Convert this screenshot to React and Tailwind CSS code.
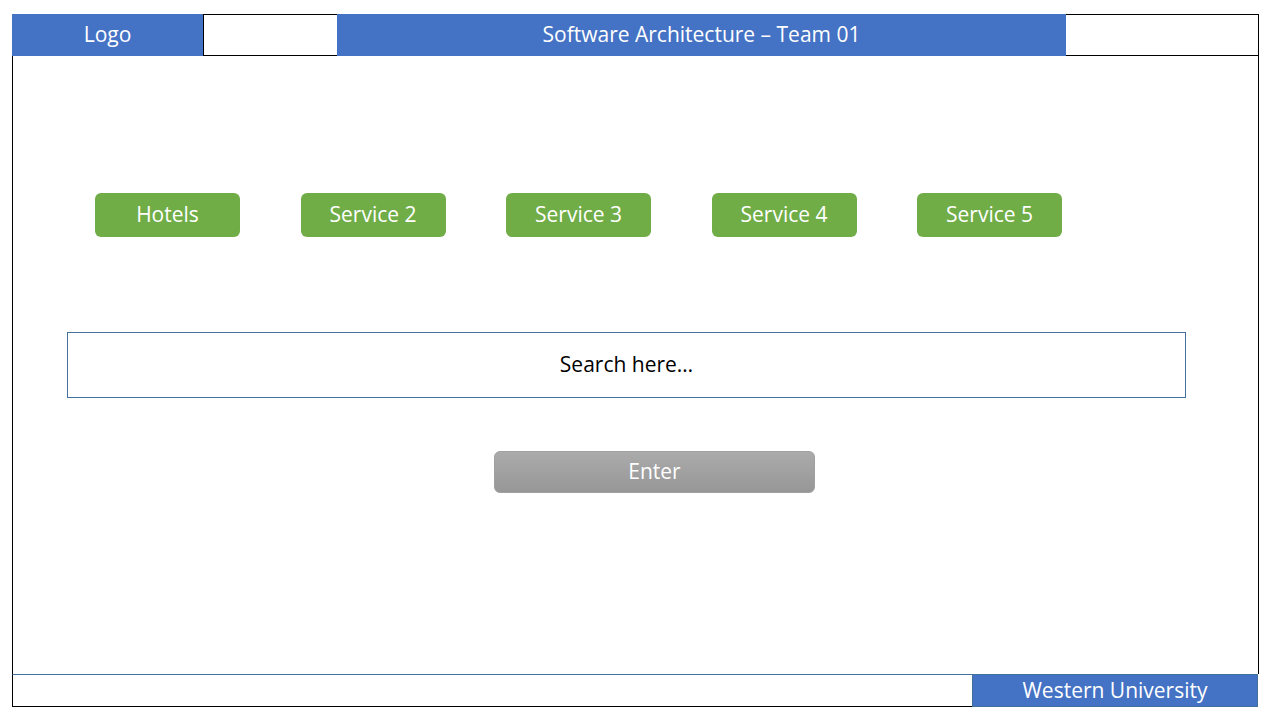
import React from "react";

const services = ["Hotels", "Service 2", "Service 3", "Service 4", "Service 5"];

const App = () => {
  return (
    <div className="w-[1280px] h-[720px] bg-white pt-[14px] pl-[12px] font-['Open_Sans','Lato',sans-serif] text-[21px]">
      <div className="w-[1247px] h-[693px] flex flex-col">
        {/* Header */}
        <div className="h-[42px] flex shrink-0">
          <div className="w-[191px] bg-[#4472c4] text-white flex items-center justify-center">
            Logo
          </div>
          <div className="w-[134px] border-t border-b border-l border-black" />
          <div className="w-[729px] bg-[#4472c4] text-white flex items-center justify-center">
            Software Architecture – Team 01
          </div>
          <div className="flex-1 border-t border-b border-r border-black" />
        </div>

        {/* Main */}
        <div className="flex-1 border-l border-r border-black flex flex-col">
          <div className="flex gap-[60.5px] pl-[82px] mt-[137px]">
            {services.map((s) => (
              <button
                key={s}
                className="w-[145px] h-[44px] rounded-[6px] bg-[#70ad47] text-white flex items-center justify-center"
              >
                {s}
              </button>
            ))}
          </div>

          <div className="ml-[54px] mt-[95px] w-[1119px] h-[66px] border border-[#41719c] flex items-center justify-center text-black">
            Search here…
          </div>

          <button className="ml-[481px] mt-[53px] w-[321px] h-[42px] rounded-[6px] bg-gradient-to-b from-[#ababab] to-[#979797] border border-[#a0a0a0] text-white flex items-center justify-center">
            Enter
          </button>
        </div>

        {/* Footer */}
        <div className="h-[33px] flex shrink-0">
          <div className="w-[960px] border-t border-t-[#41719c] border-l border-l-black border-b border-b-black" />
          <div className="w-[286px] bg-[#4472c4] border border-[#41719c] text-white flex items-center justify-center">
            Western University
          </div>
        </div>
      </div>
    </div>
  );
};

export default App;
